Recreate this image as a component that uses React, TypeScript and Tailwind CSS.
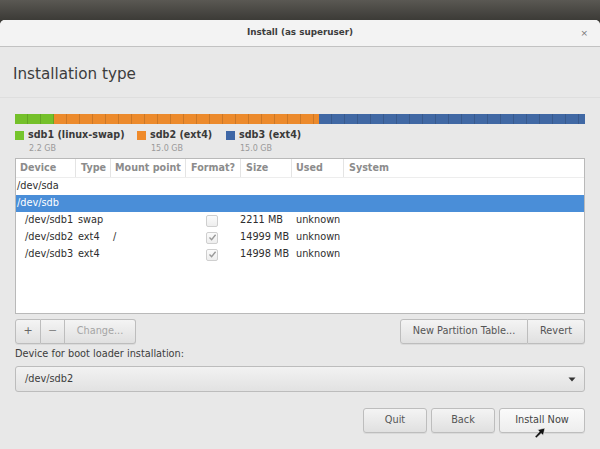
import React from "react";

const rows = [
  { dev: "/dev/sdb1", type: "swap", mount: "", fmt: false, size: "2211 MB", used: "unknown" },
  { dev: "/dev/sdb2", type: "ext4", mount: "/", fmt: true, size: "14999 MB", used: "unknown" },
  { dev: "/dev/sdb3", type: "ext4", mount: "", fmt: true, size: "14998 MB", used: "unknown" },
];

const cols = "grid grid-cols-[59px_35px_75px_55px_51px_52px_1fr]";

export default function App() {
  return (
    <div className="w-[600px] h-[449px] overflow-hidden flex flex-col bg-[#3c3b37] font-['DejaVu_Sans',sans-serif] text-[#3c3c3c] relative">
      {/* panel behind the window */}
      <div className="h-[20px] shrink-0 bg-gradient-to-b from-[#5a5853] to-[#3c3b37]" />

      {/* Window */}
      <div className="flex-1 flex flex-col bg-[#e8e8e8] rounded-t-[5px] overflow-hidden">
        <div className="h-[27px] shrink-0 relative flex items-center justify-center bg-[#f3f3f3] border-b border-[#c2c2c2]">
          <span className="text-[8.8px] font-bold text-[#3d3d3d]">Install (as superuser)</span>
          <span className="absolute right-[12px] top-[7px] text-[9px] text-[#777]">×</span>
        </div>

        <div className="h-[51px] shrink-0 flex items-center px-[13px] pt-[5px] border-b border-[#dedede]">
          <h1 className="text-[15.2px] text-[#3c3c3c]">Installation type</h1>
        </div>

        <div className="flex-1 flex flex-col px-[15px] pt-[16px]">
          {/* Partition bar */}
          <div className="h-[10px] shrink-0 flex shadow-[inset_0_-1px_0_rgba(0,0,0,0.25)]">
            <PartSeg width="w-[39px]" color="bg-[#74c02a]" />
            <PartSeg width="w-[265px]" color="bg-[#ec8a2c]" />
            <PartSeg width="flex-1" color="bg-[#4068a4]" />
          </div>

          {/* Legend */}
          <div className="flex h-[34px] shrink-0 pt-[5px]">
            <Legend color="bg-[#76c52c]" label="sdb1 (linux-swap)" size="2.2 GB" w="w-[122px]" />
            <Legend color="bg-[#ef8a2a]" label="sdb2 (ext4)" size="15.0 GB" w="w-[89px]" />
            <Legend color="bg-[#3f67a6]" label="sdb3 (ext4)" size="15.0 GB" w="w-[100px]" />
          </div>

          {/* Partition table */}
          <div className="h-[156px] shrink-0 bg-white border border-[#b9b9b9] flex flex-col">
            <div className={`${cols} h-[19px] border-b border-[#ededed] text-[9.6px] font-bold text-[#8c8c8c] items-stretch`}>
              <HeadCell pad="pl-[4px]" first>Device</HeadCell>
              <HeadCell pad="pl-[5px]">Type</HeadCell>
              <HeadCell pad="pl-[4px]">Mount point</HeadCell>
              <HeadCell pad="pl-[5px]">Format?</HeadCell>
              <HeadCell pad="pl-[5px]">Size</HeadCell>
              <HeadCell pad="pl-[4px]">Used</HeadCell>
              <HeadCell pad="pl-[5px]">System</HeadCell>
            </div>
            <div className="h-[17px] flex items-center pl-[1px] text-[9.75px] text-[#2e2e2e]">/dev/sda</div>
            <div className="h-[17px] flex items-center pl-[1px] text-[9.75px] text-white bg-[#4a8ed8]">/dev/sdb</div>
            {rows.map((r) => (
              <div key={r.dev} className={`${cols} h-[17px] items-center text-[9.75px] text-[#2e2e2e]`}>
                <span className="pl-[9px]">{r.dev}</span>
                <span className="pl-[3px]">{r.type}</span>
                <span className="pl-[3px]">{r.mount}</span>
                <span className="flex justify-center pr-[1px]">
                  <CheckBox checked={r.fmt} />
                </span>
                <span className="whitespace-nowrap">{r.size}</span>
                <span className="pl-[5px]">{r.used}</span>
                <span />
              </div>
            ))}
          </div>

          {/* Table buttons */}
          <div className="flex mt-[5px] shrink-0">
            <div className="flex">
              <Btn className="w-[26px] h-[25px] rounded-l-[3px] text-[11px] text-[#666]">+</Btn>
              <Btn className="w-[24px] h-[25px] border-l-0 text-[11px] text-[#888]">−</Btn>
              <Btn className="w-[71px] h-[25px] border-l-0 rounded-r-[3px] text-[#a5a5a5]">Change...</Btn>
            </div>
            <div className="flex-1" />
            <Btn className="w-[128px] h-[25px] rounded-l-[3px] text-[#555]">New Partition Table...</Btn>
            <Btn className="w-[57px] h-[25px] border-l-0 rounded-r-[3px] text-[#555]">Revert</Btn>
          </div>

          <div className="mt-[2px] h-[16px] shrink-0 flex items-center text-[9.75px] text-[#3c3c3c]">
            Device for boot loader installation:
          </div>

          <div className="mt-[4px] h-[26px] shrink-0 flex items-center justify-between px-[9px] rounded-[3px] border border-[#bcbcbc] bg-gradient-to-b from-[#f2f2f2] to-[#e2e2e2] text-[9.75px] text-[#3c3c3c]">
            <span>/dev/sdb2</span>
            <svg width="8" height="5" viewBox="0 0 8 5" className="mr-[-1px]">
              <path d="M0.5 0.5 L7.5 0.5 L4 4.5 Z" fill="#333" />
            </svg>
          </div>

          <div className="flex justify-end gap-[4px] mt-[16px] shrink-0">
            <Btn className="w-[64px] h-[25px] rounded-[3px] text-[#555]">Quit</Btn>
            <Btn className="w-[64px] h-[25px] rounded-[3px] text-[#555]">Back</Btn>
            <Btn className="w-[86px] h-[25px] rounded-[3px] text-[#444] from-[#fbfbfb] to-[#ededed]">Install Now</Btn>
          </div>
        </div>
      </div>

      {/* Mouse pointer */}
      <svg className="absolute left-[534px] top-[427px]" width="12" height="12" viewBox="0 0 12 12">
        <path d="M11 1 L3.5 2.8 L5.4 4.6 L1 9.6 L2.4 11 L7.2 6.4 L9.2 8.5 Z" fill="#111" stroke="#fff" strokeWidth="0.6" />
      </svg>
    </div>
  );
}

const PartSeg = ({ width, color }: any) => (
  <div
    className={`${width} ${color} h-full bg-[image:repeating-linear-gradient(90deg,transparent_0px,transparent_12px,rgba(0,0,0,0.14)_12px,rgba(0,0,0,0.14)_13px)]`}
  />
);

const Legend = ({ color, label, size, w }: any) => (
  <div className={`${w} flex flex-col`}>
    <div className="flex items-center h-[12px]">
      <div className={`w-[9px] h-[9px] ${color} mr-[4px]`} />
      <span className="text-[9.6px] font-bold text-[#3a3a3a] whitespace-nowrap">{label}</span>
    </div>
    <span className="text-[8px] text-[#9a9a9a] pl-[14px] mt-[2px]">{size}</span>
  </div>
);

const HeadCell = ({ children, pad, first }: any) => (
  <div className={`${pad} flex items-center whitespace-nowrap ${first ? "" : "border-l border-[#e4e4e4]"}`}>
    {children}
  </div>
);

const CheckBox = ({ checked }: any) => (
  <span className="w-[12px] h-[12px] rounded-[2px] border border-[#cfcfcf] bg-gradient-to-b from-[#fbfbfb] to-[#eeeeee] flex items-center justify-center">
    {checked && (
      <svg width="9" height="9" viewBox="0 0 9 9">
        <path d="M1.5 4.6 L3.6 6.7 L7.6 1.8" fill="none" stroke="#9a9a9a" strokeWidth="1.4" />
      </svg>
    )}
  </span>
);

const Btn = ({ children, className }: any) => (
  <div
    className={`flex items-center justify-center border border-[#bdbdbd] bg-gradient-to-b from-[#f4f4f4] to-[#e0e0e0] text-[9.75px] whitespace-nowrap shadow-[0_1px_0_rgba(0,0,0,0.06)] ${className}`}
  >
    {children}
  </div>
);
